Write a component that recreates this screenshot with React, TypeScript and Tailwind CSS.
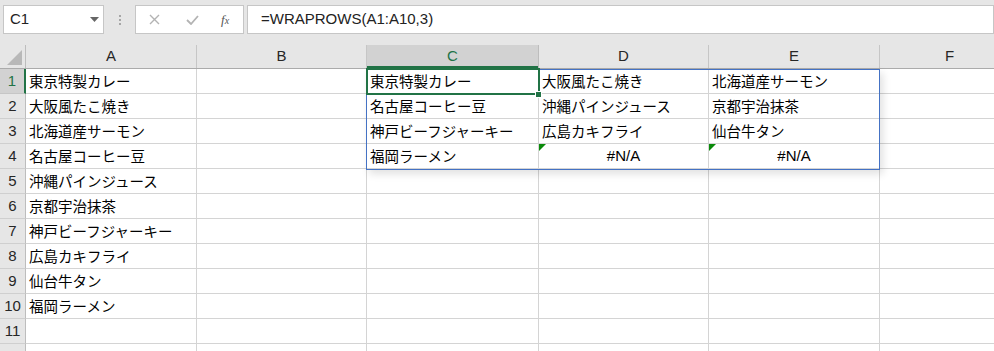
const cols = [
  { key: "A", w: "w-[171px]" },
  { key: "B", w: "w-[170px]" },
  { key: "C", w: "w-[172px]" },
  { key: "D", w: "w-[170px]" },
  { key: "E", w: "w-[171px]" },
  { key: "F", w: "w-[140px]" },
];

const listA = [
  "東京特製カレー",
  "大阪風たこ焼き",
  "北海道産サーモン",
  "名古屋コーヒー豆",
  "沖縄パインジュース",
  "京都宇治抹茶",
  "神戸ビーフジャーキー",
  "広島カキフライ",
  "仙台牛タン",
  "福岡ラーメン",
];

type Cell = { text: string; na?: boolean };

function cellFor(row: number, col: string): Cell {
  if (col === "A") return { text: listA[row] ?? "" };
  const idx = { C: 0, D: 1, E: 2 }[col as "C" | "D" | "E"];
  if (idx === undefined || row > 3) return { text: "" };
  const v = listA[row * 3 + idx];
  if (v === undefined) return { text: "#N/A", na: true };
  return { text: v };
}

const rows = Array.from({ length: 12 }, (_, i) => i);

export default function App() {
  return (
    <div
      className="relative h-[351px] w-[994px] overflow-hidden bg-[#e6e6e6] text-[#000]"
      style={{ fontFamily: '"Noto Sans CJK JP", "Liberation Sans", sans-serif' }}
    >
      {/* formula bar */}
      <div className="flex h-[45px] items-start pl-[3px] pt-[5px]">
        <div className="flex h-[29px] w-[101px] shrink-0 items-center justify-between border border-[#c6c6c6] bg-white pl-[6px] pr-[4px]">
          <span className="text-[15px] text-[#222]" style={{ fontFamily: '"Liberation Sans", sans-serif' }}>
            C1
          </span>
          <svg width="9" height="5" viewBox="0 0 9 5">
            <path d="M0 0h9L4.5 5z" fill="#666" />
          </svg>
        </div>
        <div className="flex h-[29px] w-[31px] shrink-0 items-center justify-center">
          <div className="flex flex-col gap-[2px]">
            <span className="h-[2px] w-[2px] bg-[#a6a6a6]" />
            <span className="h-[2px] w-[2px] bg-[#a6a6a6]" />
            <span className="h-[2px] w-[2px] bg-[#a6a6a6]" />
          </div>
        </div>
        <div className="flex h-[29px] w-[109px] shrink-0 items-center border border-[#c6c6c6] bg-white">
          <svg className="ml-[13px]" width="11" height="11" viewBox="0 0 11 11">
            <path d="M1 1l9 9M10 1l-9 9" stroke="#b3b3b3" strokeWidth="1.4" />
          </svg>
          <svg className="ml-[26px]" width="13" height="10" viewBox="0 0 13 10">
            <path d="M1 5l4 4 7-8" stroke="#b3b3b3" strokeWidth="1.8" fill="none" />
          </svg>
          <span
            className="ml-[22px] text-[13px] italic text-[#555]"
            style={{ fontFamily: '"Liberation Serif", serif' }}
          >
            f<span className="text-[10px]">x</span>
          </span>
        </div>
        <div className="ml-[3px] flex h-[29px] flex-1 items-center border border-[#c6c6c6] bg-white pl-[13px]">
          <span className="text-[15px] text-[#222]" style={{ fontFamily: '"Liberation Sans", sans-serif' }}>
            =WRAPROWS(A1:A10,3)
          </span>
        </div>
      </div>

      {/* grid */}
      <div className="relative">
        {/* column headers */}
        <div className="flex h-[24px] border-b border-[#ababab] bg-[#e6e6e6]">
          <div className="relative w-[26px] shrink-0 border-r border-[#bdbdbd]">
            <svg className="absolute bottom-[3px] right-[3px]" width="15" height="15" viewBox="0 0 15 15">
              <path d="M15 0V15H0z" fill="#b8b8b8" />
            </svg>
          </div>
          {cols.map((c) => {
            const sel = c.key === "C";
            return (
              <div
                key={c.key}
                className={`${c.w} flex shrink-0 items-center justify-center border-r text-[15px] ${
                  sel
                    ? "border-[#bdbdbd] bg-[#d2d2d2] text-[#217346] shadow-[inset_0_-2px_0_#217346]"
                    : "border-[#c6c6c6] text-[#262626]"
                }`}
                style={{ fontFamily: '"Liberation Sans", sans-serif' }}
              >
                {c.key}
              </div>
            );
          })}
        </div>

        {rows.map((r) => (
          <div key={r} className="flex h-[25px]">
            <div
              className={`flex w-[26px] shrink-0 items-center justify-center border-b border-r text-[15px] ${
                r === 0
                  ? "border-b-[#c6c6c6] border-r-[#217346] border-r-2 bg-[#d2d2d2] text-[#217346]"
                  : "border-b-[#cfcfcf] border-r-[#bdbdbd] bg-[#e6e6e6] text-[#262626]"
              }`}
              style={{ fontFamily: '"Liberation Sans", sans-serif' }}
            >
              {r < 11 ? r + 1 : ""}
            </div>
            {cols.map((c) => {
              const cell = cellFor(r, c.key);
              return (
                <div
                  key={c.key}
                  className={`${c.w} relative flex shrink-0 items-center whitespace-nowrap border-b border-r border-[#d4d4d4] bg-white text-[14.5px] ${
                    cell.na ? "justify-center" : "pl-[3px]"
                  }`}
                >
                  {cell.na && (
                    <svg className="absolute left-0 top-0" width="7" height="7" viewBox="0 0 7 7">
                      <path d="M0 0h7L0 7z" fill="#0a8a0a" />
                    </svg>
                  )}
                  <span
                    style={cell.na ? { fontFamily: '"Liberation Sans", sans-serif', fontSize: "15px" } : undefined}
                  >
                    {cell.text}
                  </span>
                </div>
              );
            })}
          </div>
        ))}

        {/* spill range border */}
        <div className="pointer-events-none absolute left-[366px] top-[24px] h-[101px] w-[514px] border border-[#4472c4] shadow-[3px_4px_8px_rgba(0,0,0,0.12)]" />
        {/* active cell */}
        <div className="pointer-events-none absolute left-[366px] top-[23px] h-[27px] w-[174px] border-2 border-[#217346]" />
        <div className="pointer-events-none absolute left-[535px] top-[46px] h-[7px] w-[7px] border border-white bg-[#217346]" />
      </div>
    </div>
  );
}
